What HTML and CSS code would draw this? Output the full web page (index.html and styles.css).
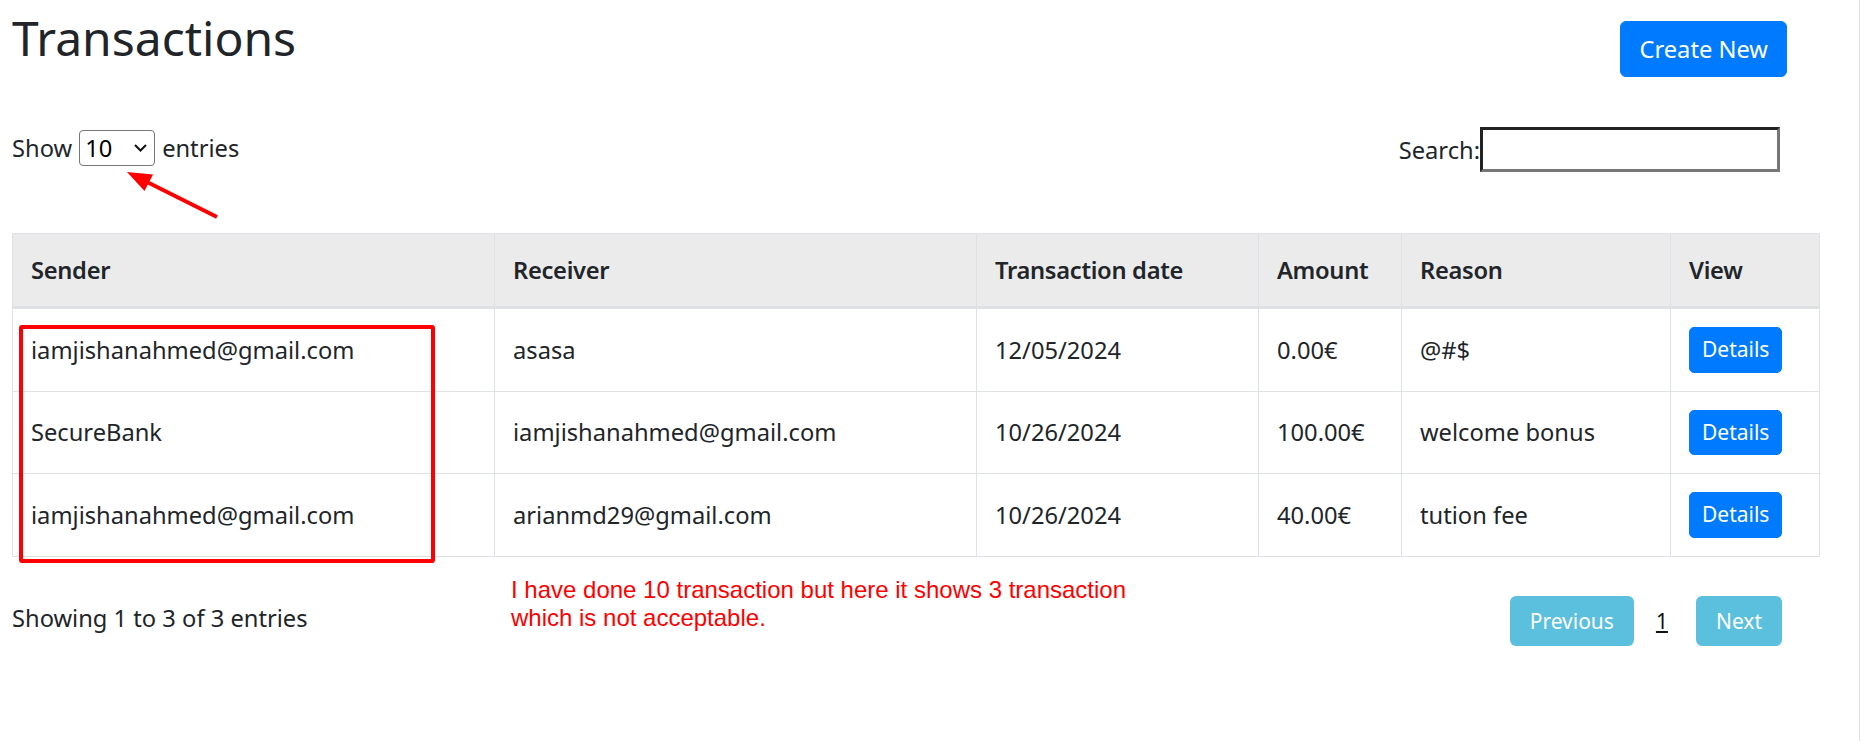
FILE: index.html
```html
<!DOCTYPE html>
<html lang="en">
<head>
<meta charset="utf-8">
<title>Transactions</title>
<link rel="stylesheet" href="styles.css">
</head>
<body>
<div class="page">
  <header class="page-head">
    <h1 class="title">Transactions</h1>
    <a class="btn btn-primary btn-create" href="#">Create New</a>
  </header>

  <div class="controls">
    <label class="length">
      <span>Show</span>
      <span class="select-wrap">
        <select class="length-select">
          <option>10</option>
          <option>25</option>
          <option>50</option>
          <option>100</option>
        </select>
        <svg class="chev" viewBox="0 0 13 8" width="13" height="8"><path d="M1 1 L6.5 6.5 L12 1" fill="none" stroke="#111" stroke-width="2"/></svg>
      </span>
      <span>entries</span>
    </label>
    <label class="search">Search:<input type="search" class="search-input"></label>
  </div>

  <table class="tx-table">
    <colgroup>
      <col class="c-sender">
      <col class="c-receiver">
      <col class="c-date">
      <col class="c-amount">
      <col class="c-reason">
      <col class="c-view">
    </colgroup>
    <thead>
      <tr>
        <th>Sender</th>
        <th>Receiver</th>
        <th>Transaction date</th>
        <th>Amount</th>
        <th>Reason</th>
        <th>View</th>
      </tr>
    </thead>
    <tbody>
      <tr>
        <td>iamjishanahmed@gmail.com</td>
        <td>asasa</td>
        <td>12/05/2024</td>
        <td>0.00€</td>
        <td>@#$</td>
        <td><a class="btn btn-primary btn-sm" href="#">Details</a></td>
      </tr>
      <tr>
        <td>SecureBank</td>
        <td>iamjishanahmed@gmail.com</td>
        <td>10/26/2024</td>
        <td>100.00€</td>
        <td>welcome bonus</td>
        <td><a class="btn btn-primary btn-sm" href="#">Details</a></td>
      </tr>
      <tr>
        <td>iamjishanahmed@gmail.com</td>
        <td>arianmd29@gmail.com</td>
        <td>10/26/2024</td>
        <td>40.00€</td>
        <td>tution fee</td>
        <td><a class="btn btn-primary btn-sm" href="#">Details</a></td>
      </tr>
    </tbody>
  </table>

  <div class="footer-row">
    <div class="info">Showing 1 to 3 of 3 entries</div>
    <div class="pager">
      <a class="pg-btn" href="#">Previous</a>
      <a class="pg-num" href="#">1</a>
      <a class="pg-btn" href="#">Next</a>
    </div>
  </div>

  <div class="annot-box"></div>
  <svg class="annot-arrow" width="240" height="240" viewBox="0 0 240 240">
    <line x1="217" y1="217" x2="147" y2="182" stroke="#f00" stroke-width="4"/>
    <polygon points="127,172 153,174.5 144.5,191" fill="#f00"/>
  </svg>
  <p class="annot-note">I have done 10 transaction but here it shows 3 transaction<br>which is not acceptable.</p>
</div>
<div class="edge"></div>
</body>
</html>
```

FILE: styles.css
```css
html, body {
  margin: 0;
  padding: 0;
  background: #fff;
}

body {
  font-family: "Noto Sans", "Open Sans", sans-serif;
  font-size: 23.7px;
  line-height: 36px;
  color: #212529;
  width: 1863px;
  height: 741px;
  overflow: hidden;
  position: relative;
}

.page {
  position: relative;
  padding: 0 44px 0 12px;
}

/* ---------- header ---------- */
.page-head {
  display: flex;
  justify-content: space-between;
  align-items: flex-start;
  padding-right: 32px;
}

.title {
  margin: 9px 0 0 0;
  font-size: 48px;
  line-height: 57.6px;
  font-weight: 400;
  color: #212529;
}

.btn {
  display: inline-block;
  text-decoration: none;
  color: #fff;
  border: 1px solid transparent;
  font-weight: 400;
  text-align: center;
  white-space: nowrap;
}

.btn-primary {
  background: #007bff;
  border-color: #007bff;
}

.btn-create {
  margin-top: 21px;
  font-size: 23.7px;
  line-height: 36px;
  padding: 9px 18px;
  border-radius: 6px;
}

.btn-sm {
  font-size: 21px;
  line-height: 31.5px;
  padding: 6px 12px;
  border-radius: 5px;
  vertical-align: middle;
}

/* ---------- controls ---------- */
.controls {
  display: flex;
  justify-content: space-between;
  align-items: flex-start;
  margin-top: 50px;
  padding-right: 39px;
}

.length {
  display: flex;
  align-items: center;
  gap: 7px;
  margin-top: 3px;
}

.select-wrap {
  position: relative;
  display: block;
  width: 76px;
  height: 36px;
}

.length-select {
  appearance: none;
  -webkit-appearance: none;
  width: 76px;
  height: 36px;
  box-sizing: border-box;
  border: 1px solid #767676;
  border-radius: 4px;
  background: #fff;
  color: #000;
  font-family: "Noto Sans", "Open Sans", sans-serif;
  font-size: 23.7px;
  padding: 0 0 0 5px;
  margin: 0;
}

.chev {
  position: absolute;
  right: 8px;
  top: 14px;
  pointer-events: none;
}

.search {
  display: flex;
  align-items: center;
}

.search-input {
  width: 300px;
  height: 45px;
  box-sizing: border-box;
  border: 3px solid;
  border-color: #222 #767676 #767676 #222;
  background: #fff;
  margin: 0;
  padding: 0 4px;
  font-size: 24px;
}

/* ---------- table ---------- */
.tx-table {
  margin-top: 61px;
  width: 1807px;
  table-layout: fixed;
  border-collapse: collapse;
}

.c-sender { width: 482px; }
.c-receiver { width: 482px; }
.c-date { width: 282px; }
.c-amount { width: 143px; }
.c-reason { width: 269px; }
.c-view { width: 149px; }

.tx-table th,
.tx-table td {
  padding: 18px;
  border: 1px solid #dee2e6;
  vertical-align: middle;
  text-align: left;
  white-space: nowrap;
  line-height: 36px;
}

.tx-table thead th {
  background: #ebebeb;
  font-weight: 600;
  letter-spacing: -0.3px;
  border-bottom: 3px solid #dee2e6;
}

/* ---------- footer ---------- */
.footer-row {
  display: flex;
  justify-content: space-between;
  align-items: flex-start;
  margin-top: 39px;
  padding-right: 37px;
}

.info {
  padding-top: 4px;
}

.pager {
  display: flex;
  align-items: center;
}

.pg-btn {
  display: inline-block;
  background: #5bc0de;
  color: #fff;
  text-decoration: none;
  font-size: 21px;
  line-height: 32px;
  padding: 9px 20px;
  border-radius: 6px;
}

.pg-num {
  font-size: 21px;
  line-height: 32px;
  color: #111;
  text-decoration: underline;
  margin: 0 28px 0 22px;
}

/* ---------- annotations (drawn over the screenshot) ---------- */
.annot-box {
  position: absolute;
  left: 19px;
  top: 325px;
  width: 416px;
  height: 238px;
  box-sizing: border-box;
  border: 4px solid #ff0000;
  border-radius: 3px;
}

.annot-arrow {
  position: absolute;
  left: 0;
  top: 0;
}

.annot-note {
  position: absolute;
  left: 511px;
  top: 576px;
  margin: 0;
  font-family: "Liberation Sans", Arial, sans-serif;
  font-size: 24px;
  line-height: 28px;
  color: #ff0000;
}

.edge {
  position: absolute;
  top: 0;
  right: 3px;
  width: 1px;
  height: 741px;
  background: #e3e3e3;
}
```
